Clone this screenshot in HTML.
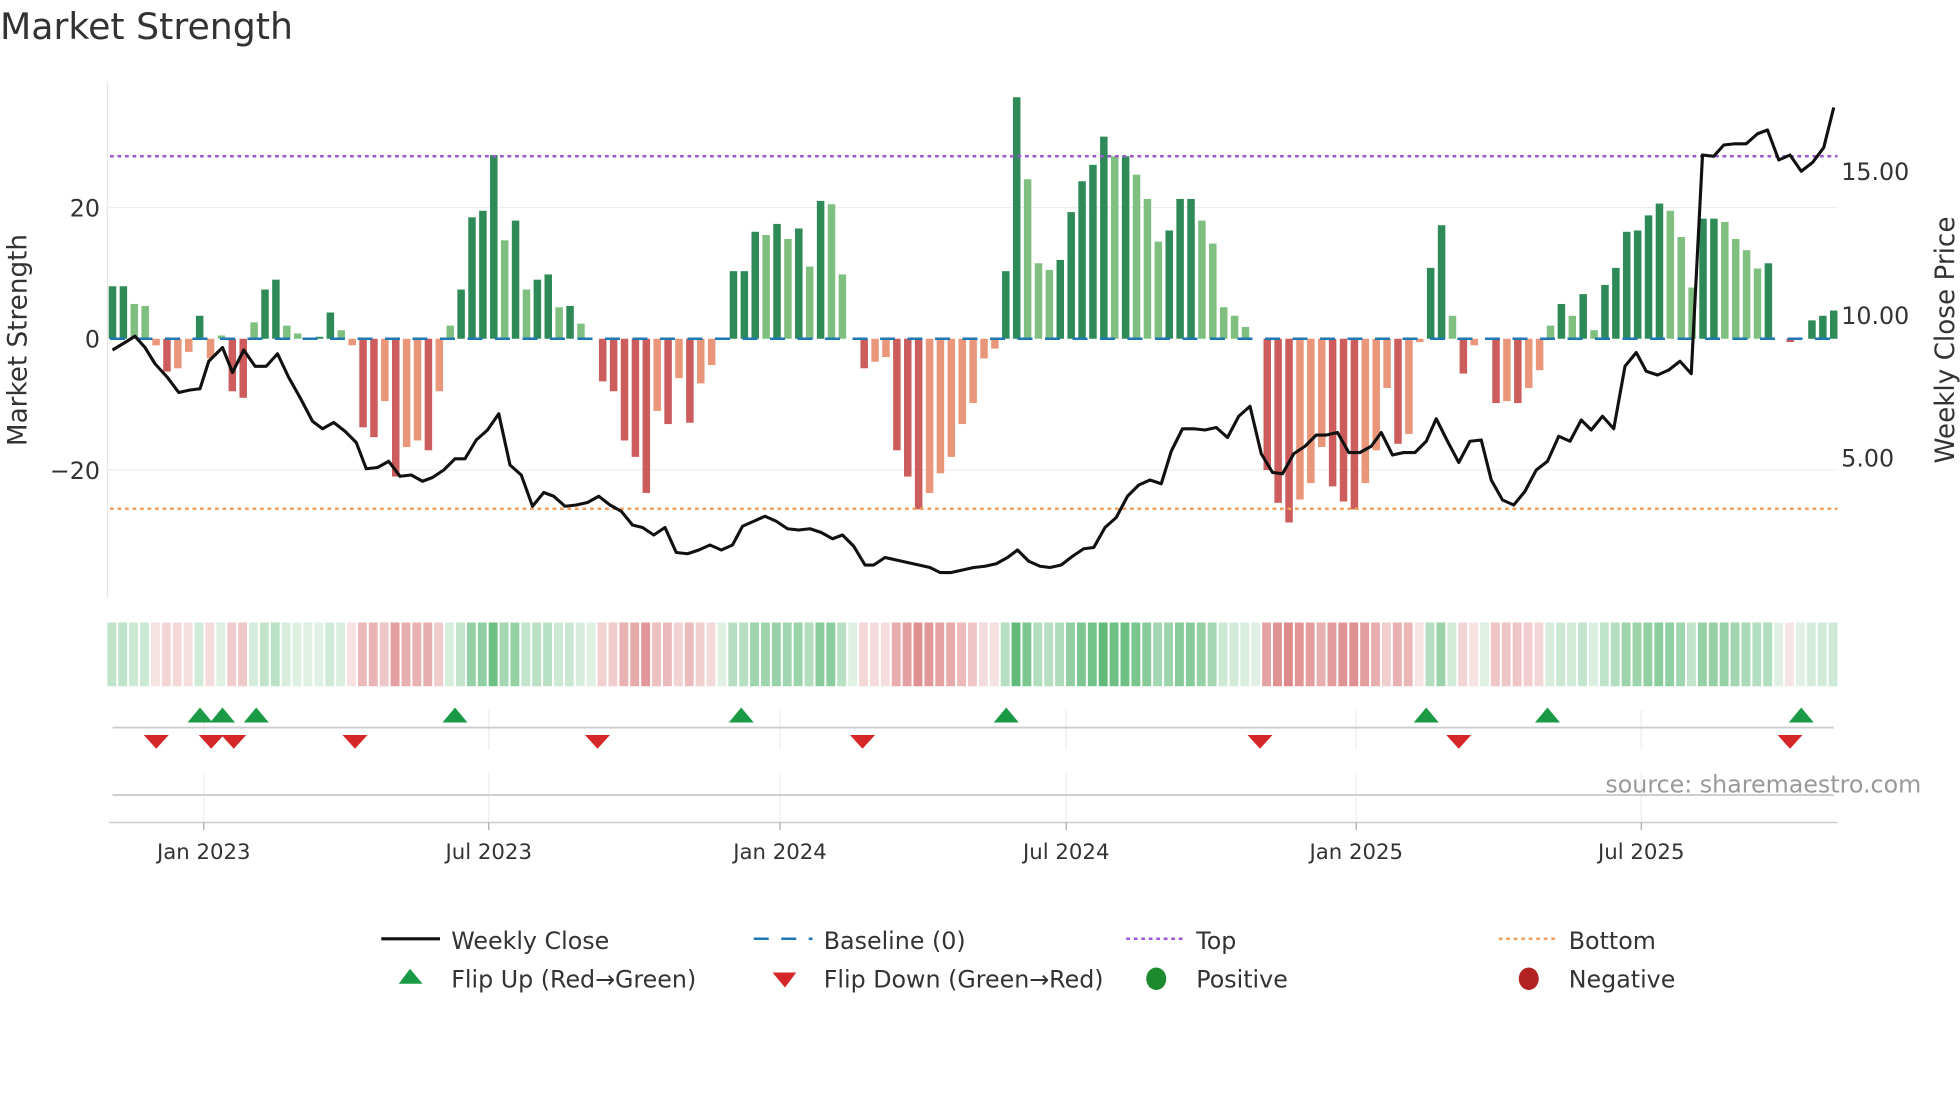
<!DOCTYPE html>
<html><head><meta charset="utf-8"><style>
html,body{margin:0;padding:0;background:#fff;}
svg{display:block;font-family:"DejaVu Sans","Liberation Sans",sans-serif;}
</style></head><body>
<svg id="s" width="1960" height="1102" viewBox="0 0 1568 881.6" xmlns="http://www.w3.org/2000/svg">
<rect width="1568" height="881.6" fill="#fff"/>
<text x="0" y="31" font-size="29" fill="#333">Market Strength</text>
<line x1="86" y1="65" x2="86" y2="478" stroke="#e6e6e6"/>
<line x1="86" y1="166" x2="1470" y2="166" stroke="#eee"/>
<line x1="86" y1="376" x2="1470" y2="376" stroke="#eee"/>
<g font-size="19" fill="#333">
<text x="80" y="173" text-anchor="end">20</text>
<text x="80" y="278" text-anchor="end">0</text>
<text x="80" y="383" text-anchor="end">−20</text>
<text x="1473" y="144">15.00</text>
<text x="1473" y="259">10.00</text>
<text x="1473" y="373">5.00</text>
<text transform="translate(21,272) rotate(-90)" text-anchor="middle" font-size="21">Market Strength</text>
<text transform="translate(1563,272) rotate(-90)" text-anchor="middle" font-size="21">Weekly Close Price</text>
</g>
<g id="bars"></g>
<line x1="88" y1="271" x2="1470" y2="271" stroke="#1f77b4" stroke-width="2" stroke-dasharray="12,10"/>
<line x1="88" y1="125" x2="1470" y2="125" stroke="#9b59d6" stroke-width="2" stroke-dasharray="3,3"/>
<line x1="88" y1="407" x2="1470" y2="407" stroke="#f0a060" stroke-width="2" stroke-dasharray="3,3"/>
<polyline id="pl" fill="none" stroke="#111" stroke-width="2.5" stroke-linejoin="round"/>
<g id="strip"></g>
<g stroke="#eee">
<line x1="163" y1="568" x2="163" y2="600"/><line x1="391" y1="568" x2="391" y2="600"/><line x1="624" y1="568" x2="624" y2="600"/><line x1="853" y1="568" x2="853" y2="600"/><line x1="1085" y1="568" x2="1085" y2="600"/><line x1="1313" y1="568" x2="1313" y2="600"/>
<line x1="163" y1="618" x2="163" y2="658"/><line x1="391" y1="618" x2="391" y2="658"/><line x1="624" y1="618" x2="624" y2="658"/><line x1="853" y1="618" x2="853" y2="658"/><line x1="1085" y1="618" x2="1085" y2="658"/><line x1="1313" y1="618" x2="1313" y2="658"/>
</g>
<line x1="90" y1="582" x2="1467" y2="582" stroke="#ccc" stroke-width="1.5"/>
<line x1="90" y1="636" x2="1467" y2="636" stroke="#ccc" stroke-width="1.5"/>
<line x1="87" y1="658" x2="1470" y2="658" stroke="#ccc" stroke-width="1.2"/>
<g id="mk"></g>
<text x="1537" y="634" font-size="19" fill="#999" text-anchor="end">source: sharemaestro.com</text>
<g font-size="17" fill="#333" text-anchor="middle">
<line x1="163" y1="658" x2="163" y2="664" stroke="#aaa"/><text x="163" y="687">Jan 2023</text>
<line x1="391" y1="658" x2="391" y2="664" stroke="#aaa"/><text x="391" y="687">Jul 2023</text>
<line x1="624" y1="658" x2="624" y2="664" stroke="#aaa"/><text x="624" y="687">Jan 2024</text>
<line x1="853" y1="658" x2="853" y2="664" stroke="#aaa"/><text x="853" y="687">Jul 2024</text>
<line x1="1085" y1="658" x2="1085" y2="664" stroke="#aaa"/><text x="1085" y="687">Jan 2025</text>
<line x1="1313" y1="658" x2="1313" y2="664" stroke="#aaa"/><text x="1313" y="687">Jul 2025</text>
</g>
<g font-size="19" fill="#333">
<line x1="305" y1="751" x2="352" y2="751" stroke="#111" stroke-width="2.5"/><text x="361" y="759">Weekly Close</text>
<line x1="603" y1="751" x2="650" y2="751" stroke="#1f77b4" stroke-width="2" stroke-dasharray="12,10"/><text x="659" y="759">Baseline (0)</text>
<line x1="901" y1="751" x2="948" y2="751" stroke="#9b59d6" stroke-width="2" stroke-dasharray="3,3"/><text x="957" y="759">Top</text>
<line x1="1199" y1="751" x2="1246" y2="751" stroke="#f0a060" stroke-width="2" stroke-dasharray="3,3"/><text x="1255" y="759">Bottom</text>
<polygon points="328,775 319,787 338,787" fill="#1a9a45"/><text x="361" y="790">Flip Up (Red→Green)</text>
<polygon points="618,778 637,778 628,790" fill="#d62728"/><text x="659" y="790">Flip Down (Green→Red)</text>
<ellipse cx="925" cy="783" rx="8" ry="9" fill="#1e8a2e"/><text x="957" y="790">Positive</text>
<ellipse cx="1223" cy="783" rx="8" ry="9" fill="#b22222"/><text x="1255" y="790">Negative</text>
</g>
</svg>
<script>
var v=[8,8,5.3,5,-1,-5,-4.5,-2,3.5,-3,0.5,-8,-9,2.5,7.5,9,2,0.8,0,0.3,4,1.3,-1,-13.5,-15,-9.5,-21,-16.5,-15.5,-17,-8,2,7.5,18.5,19.5,28,15,18,7.5,9,9.8,4.8,5,2.3,0,-6.5,-8,-15.5,-18,-23.5,-11,-13,-6,-12.8,-6.8,-4,0,10.3,10.3,16.3,15.8,17.5,15.2,16.8,11,21,20.5,9.8,0,-4.5,-3.5,-2.8,-17,-21,-26,-23.5,-20.5,-18,-13,-9.8,-3,-1.5,10.3,36.8,24.3,11.5,10.5,12,19.3,24,26.5,30.8,27.8,27.8,25,21.3,14.8,16.5,21.3,21.3,18,14.5,4.8,3.5,1.8,0,-20,-25,-28,-24.5,-22,-16.5,-22.5,-24.8,-26,-22,-17,-7.5,-16,-14.5,-0.5,10.8,17.3,3.5,-5.3,-1,0,-9.8,-9.5,-9.8,-7.5,-4.8,2,5.3,3.5,6.8,1.3,8.2,10.8,16.3,16.5,18.8,20.6,19.5,15.5,7.8,18.3,18.3,17.8,15.2,13.5,10.7,11.5,0,-0.5,0,2.8,3.5,4.3];
var ns="http://www.w3.org/2000/svg",n=v.length,x0=90,x1=1467,dx=(x1-x0)/(n-1);
function el(t,a,p){var e=document.createElementNS(ns,t);for(var k in a)e.setAttribute(k,a[k]);p.appendChild(e);return e;}
var B=document.getElementById('bars'),S=document.getElementById('strip');
for(var i=0;i<n;i++){var x=x0+i*dx,val=v[i],pr=i?v[i-1]:0;var dark=Math.abs(val)>=Math.abs(pr);
var h=Math.abs(val)*5.25,y=val>=0?271-h:271;
var c=val>=0?(dark?'#2e8b57':'#7fbf7f'):(dark?'#cd5c5c':'#e9967a');
if(h>0.5)el('rect',{x:x-3,y:y,width:6,height:h,fill:c},B);
var a=Math.min(1,0.2+Math.abs(val)/38);
var sc=val>=0?'rgba(60,170,90,'+(a*0.8)+')':'rgba(205,80,80,'+(a*0.72)+')';
el('rect',{x:x-4.1,y:498,width:dx-1.6,height:51,fill:sc},S);}
var p=[90,280,100,274,108,269,116,278,124,291,134,302,143,314,152,312,160,311,167,289,178,278,186,298,195,280,204,293,213,293,222,283,231,302,240,318,250,337,258,343,267,338,276,345,285,354,293,375,302,374,311,369,320,381,329,380,338,385,346,382,355,376,364,367,372,367,381,352,390,344,399,331,408,372,417,380,426,405,435,394,443,397,452,405,461,404,470,402,479,397,488,404,497,409,506,420,514,422,523,428,532,422,541,442,550,443,559,440,568,436,577,440,586,436,594,421,603,417,612,413,621,417,630,423,639,424,648,423,657,426,666,431,674,428,683,437,692,452,699,452,708,446,717,448,726,450,735,452,744,454,752,458,761,458,770,456,779,454,788,453,797,451,806,446,814,440,823,449,832,453,840,454,849,452,858,445,867,439,875,438,884,422,893,414,902,397,911,388,920,384,929,387,937,361,946,343,955,343,964,344,973,342,982,350,991,333,1000,325,1009,363,1018,378,1026,379,1035,363,1044,357,1053,348,1061,348,1070,346,1079,362,1088,362,1097,357,1105,346,1114,364,1123,362,1132,362,1141,353,1149,335,1158,353,1167,370,1176,353,1185,352,1193,384,1202,400,1211,404,1220,393,1229,376,1238,369,1247,349,1256,353,1265,336,1273,344,1282,333,1291,343,1300,293,1309,282,1317,297,1326,300,1335,296,1344,289,1353,299,1362,124,1371,125,1379,116,1388,115,1397,115,1406,107,1414,104,1423,128,1432,124,1441,137,1450,130,1459,118,1467,86];
var s='';for(var i=0;i<p.length;i+=2)s+=p[i]+','+p[i+1]+' ';document.getElementById('pl').setAttribute('points',s);
var M=document.getElementById('mk');
[160,178,205,364,593,805,1141,1238,1441].forEach(function(x){el('polygon',{points:(x)+',566 '+(x-10)+',578 '+(x+10)+',578',fill:'#1a9a45'},M);});
[125,169,187,284,478,690,1008,1167,1432].forEach(function(x){el('polygon',{points:(x-10)+',588 '+(x+10)+',588 '+x+',599',fill:'#d62728'},M);});
</script>
</body></html>
